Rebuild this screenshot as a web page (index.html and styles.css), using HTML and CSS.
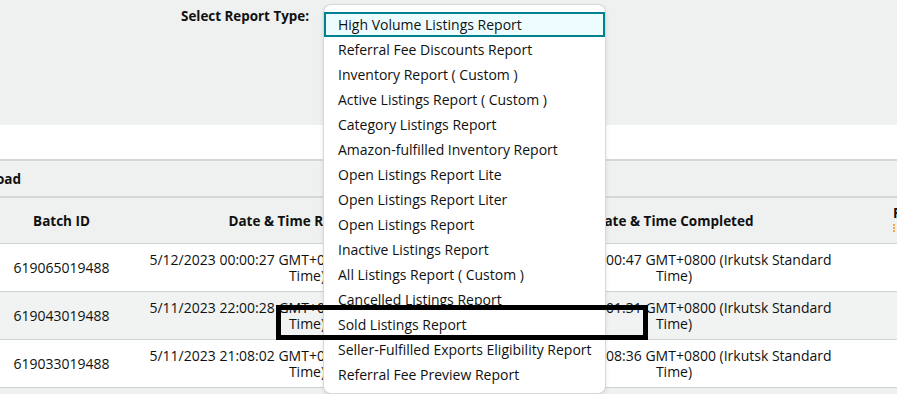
FILE: index.html
```html
<!DOCTYPE html>
<html lang="en">
<head>
    <meta charset="UTF-8">
    <meta name="viewport" content="width=device-width, initial-scale=1.0">
    <title>Inventory Reports</title>
    <link rel="stylesheet" href="styles.css">
</head>
<body>
    <div class="request-panel">
        <div class="field-row">
            <label class="field-label" for="report-type">Select Report Type:</label>
            <div class="select-wrap">
                <ul class="dropdown" id="report-type">
                    <li class="active">High Volume Listings Report</li>
                    <li>Referral Fee Discounts Report</li>
                    <li>Inventory Report ( Custom )</li>
                    <li>Active Listings Report ( Custom )</li>
                    <li>Category Listings Report</li>
                    <li>Amazon-fulfilled Inventory Report</li>
                    <li>Open Listings Report Lite</li>
                    <li>Open Listings Report Liter</li>
                    <li>Open Listings Report</li>
                    <li>Inactive Listings Report</li>
                    <li>All Listings Report ( Custom )</li>
                    <li>Cancelled Listings Report</li>
                    <li>Sold Listings Report</li>
                    <li>Seller-Fulfilled Exports Eligibility Report</li>
                    <li>Referral Fee Preview Report</li>
                </ul>
            </div>
        </div>
    </div>

    <div class="gap"></div>

    <table class="reports">
        <colgroup>
            <col style="width: 123px">
            <col style="width: 368px">
            <col style="width: 366px">
            <col style="width: 120px">
        </colgroup>
        <tr class="title-row">
            <td colspan="4"><span class="title-text">Download</span></td>
        </tr>
        <tr class="head-row">
            <th>Batch ID</th>
            <th>Date &amp; Time Requested</th>
            <th>Date &amp; Time Completed</th>
            <th class="status-head"><span class="status-label">Report Status</span><span class="sort-mark"></span></th>
        </tr>
        <tr>
            <td>619065019488</td>
            <td>5/12/2023 00:00:27 GMT+0800 (Irkutsk Standard Time)</td>
            <td>5/12/2023 00:00:47 GMT+0800 (Irkutsk Standard Time)</td>
            <td></td>
        </tr>
        <tr class="alt">
            <td>619043019488</td>
            <td>5/11/2023 22:00:28 GMT+0800 (Irkutsk Standard Time)</td>
            <td>5/11/2023 22:01:31 GMT+0800 (Irkutsk Standard Time)</td>
            <td></td>
        </tr>
        <tr>
            <td>619033019488</td>
            <td>5/11/2023 21:08:02 GMT+0800 (Irkutsk Standard Time)</td>
            <td>5/11/2023 21:08:36 GMT+0800 (Irkutsk Standard Time)</td>
            <td></td>
        </tr>
    </table>

    <div class="highlight-box"></div>
</body>
</html>
```

FILE: styles.css
```css
body {
    font-family: "Open Sans", "Noto Sans", Arial, sans-serif;
    font-size: 14px;
    color: #0f1111;
    margin: 0;
    padding: 0;
    background-color: #eff0f0;
    overflow: hidden;
    position: relative;
    height: 394px;
}
.request-panel {
    background-color: #eff0f0;
    height: 125px;
    padding-top: 5px;
    box-sizing: border-box;
}
.field-row {
    display: flex;
    gap: 15px;
}
.field-label {
    width: 309px;
    text-align: right;
    font-weight: bold;
    font-size: 13.4px;
    line-height: 22px;
}
.select-wrap {
    position: relative;
    width: 281px;
    height: 30px;
}
.dropdown {
    position: absolute;
    top: 0;
    left: 0;
    z-index: 5;
    width: 281px;
    margin: 0;
    padding: 7px 0 6px;
    list-style: none;
    background: white;
    border-radius: 7px;
    box-shadow: 0 0 0 1px #d5d9d9, 0 2px 5px rgba(15, 17, 17, 0.15);
    box-sizing: border-box;
}
.dropdown li {
    height: 25px;
    line-height: 26px;
    padding-left: 14px;
    white-space: nowrap;
    box-sizing: border-box;
}
.dropdown li.active {
    background: #edfdff;
    border: 1px solid #00818f;
    box-shadow: inset 0 0 0 1px #00818f;
    line-height: 24px;
    padding-left: 13px;
}
.gap {
    background: white;
    height: 34px;
}
.reports {
    border-collapse: collapse;
    table-layout: fixed;
    width: 977px;
    background: white;
    border-bottom: 1px solid #cfd2d2;
}
.reports td, .reports th {
    border-top: 1px solid #cfd2d2;
    text-align: center;
    line-height: 16px;
    padding: 7px 8px;
    overflow: hidden;
}
.reports tr td {
    height: 33px;
}
.reports tr.title-row td {
    background: #eff0f0;
    border-top: 2px solid #d5d8d8;
    text-align: left;
    height: 19px;
    padding: 8px 0;
    font-weight: bold;
}
.title-text {
    margin-left: -47px;
    font-size: 13.5px;
}
.head-row th {
    background: #eff0f0;
    border-top: 2px solid #d5d8d8;
    height: 31px;
    font-weight: bold;
    font-size: 13.5px;
    white-space: nowrap;
}
.reports tr.alt td {
    background: #f1f2f2;
}
.head-row .status-head {
    text-align: left;
    vertical-align: top;
    padding-left: 36px;
}
.status-label {
    display: block;
}
.sort-mark {
    display: block;
    margin-top: 3px;
    width: 6px;
    height: 8px;
    border-left: 2px dotted #f3a847;
}
.highlight-box {
    position: absolute;
    left: 276px;
    top: 305px;
    width: 372px;
    height: 35px;
    border: 5px solid black;
    box-sizing: border-box;
    z-index: 10;
}
```
